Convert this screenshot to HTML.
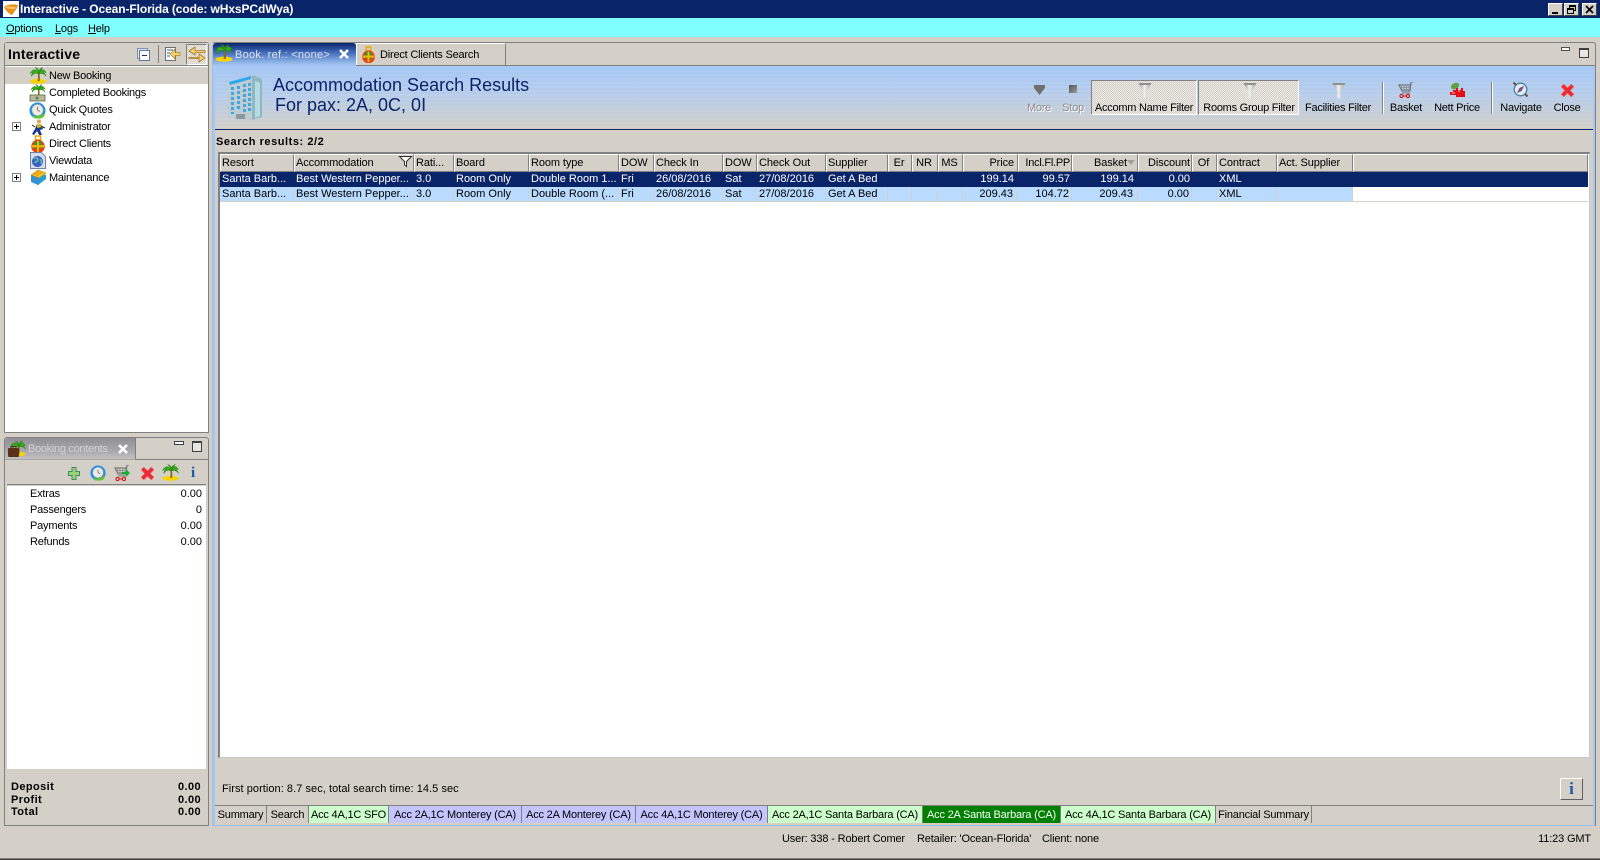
<!DOCTYPE html>
<html><head><meta charset="utf-8"><title>Interactive</title>
<style>
*{box-sizing:border-box}
html,body{margin:0;padding:0}
body{width:1600px;height:860px;position:relative;overflow:hidden;background:#d4d0c8;font:11px/13px "Liberation Sans",sans-serif;color:#000}
.a{position:absolute;white-space:nowrap}
.panel{position:absolute;border:1px solid #808080;border-radius:3px 3px 0 0}
.row{position:absolute;display:flex;left:220px;width:1368px;height:15px}
.row>div{height:15px;line-height:15px;padding:0 4px 0 2px;overflow:hidden;white-space:nowrap;flex:none}
.h{top:154px;height:18px;letter-spacing:-.1px}
.h>div{height:18px;line-height:17px;background:#d4d0c8;border-top:1px solid #fff;border-left:1px solid #fff;border-right:1px solid #808080;border-bottom:1px solid #808080;padding:0 3px 0 1px}
.r1{top:172px;background:#0a246a;color:#fff}
.r2{top:187px;height:14px;background:#b9dbff}
.r2>div{height:14px;border-right:1px solid #d4d0c8}
.r{text-align:right}
.c{text-align:center}
.row>.p2{padding-right:2px}
.h>.p2{padding-right:1px}
.tb{position:absolute;top:101px;height:14px;line-height:14px;text-align:center;white-space:nowrap;transform:translateX(-50%);letter-spacing:-.25px}
.chk{background-color:#eceae6;background-image:linear-gradient(45deg,#d4d0c8 25%,transparent 25%,transparent 75%,#d4d0c8 75%),linear-gradient(45deg,#d4d0c8 25%,transparent 25%,transparent 75%,#d4d0c8 75%);background-size:2px 2px;background-position:0 0,1px 1px}
.bt{position:absolute;top:806px;height:17px;line-height:18px;text-align:center;border-right:1px solid #808080;white-space:nowrap;overflow:hidden;letter-spacing:-.2px}
.tl{position:absolute;left:49px;height:17px;line-height:19px;white-space:nowrap;letter-spacing:-.25px}
.ex{position:absolute;left:12px;width:9px;height:9px;border:1px solid #808080;background:#fff}
.ex:before{content:"";position:absolute;left:1px;top:3px;width:5px;height:1px;background:#000}
.ex:after{content:"";position:absolute;left:3px;top:1px;width:1px;height:5px;background:#000}
.wb{position:absolute;top:3px;height:13px;width:15px;background:#d4d0c8;border:1px solid;border-color:#fff #404040 #404040 #fff}
svg{position:absolute;overflow:visible}
.l{position:absolute;left:30px;line-height:14px;letter-spacing:-.2px}
.v{position:absolute;right:1398px;line-height:14px}
.bl{position:absolute;left:11px;font-weight:bold;line-height:13px;letter-spacing:.4px}
.bv{position:absolute;right:1399px;font-weight:bold;line-height:13px;letter-spacing:.4px}
.s{letter-spacing:-.15px}
</style></head><body>
<svg width="0" height="0" style="position:absolute"><defs>
<linearGradient id="fg" x1="0" x2="1" y1="0" y2="0"><stop offset="0" stop-color="#8a8a8a"/><stop offset=".45" stop-color="#f2f2f2"/><stop offset="1" stop-color="#9a9a9a"/></linearGradient>
<symbol id="palm" viewBox="0 0 18 18"><ellipse cx="9" cy="15.200" rx="8.500" ry="2.600" fill="#f7d400"/><path d="M8.500 15c.6-3 .8-6 0-9h2c.6 3 .5 6 .2 9z" fill="#8a6a20"/><path d="M10 7C7 1 3 2 .5 7c1-1 2-1.500 3-1-1 1-1.500 2-1.500 4 2-3 4-4 8-3zM10 7c1-5 5-6 7.500-1-1-.6-2-.8-3-.5 1.500 1 2.500 2.500 3 4.500-2-3-4-3.500-7.500-3zM10 7C9 4 7.500 2 6 .5 8 1 9.500 2 10 4c1-2 2-3 4-3.500C12 3 11 5 10 7z" fill="#38a81c" stroke="#1f7c12" stroke-width=".5"/></symbol>
<symbol id="clock" viewBox="0 0 18 18"><circle cx="9" cy="9" r="8.500" fill="#2090ec"/><circle cx="9" cy="8.500" r="6" fill="#ecebe2" stroke="#9a9a9a" stroke-width=".6"/><path d="M9 5v3.500l2.500 1.500" fill="none" stroke="#777" stroke-width="1"/><path d="M3 13c3 3 8 3 12-.5l2 .5-1.500 3-3 1.500H6z" fill="#62c432"/></symbol>
<symbol id="funnel" viewBox="0 0 14 18"><path d="M0 1h14L8.700 10v7H5.300v-7z" fill="url(#fg)"/><path d="M0 1h14l-1.500 2.200h-11z" fill="#909090"/></symbol>
<symbol id="redx" viewBox="0 0 14 14"><path d="M0 3L3 0l4 4 4-4 3 3-4 4 4 4-3 3-4-4-4 4-3-3 4-4z" fill="#ee2b33" stroke="#e87a7a" stroke-width=".6"/></symbol>
<symbol id="cart" viewBox="0 0 16 16"><path d="M15 0h-2l-1 9H4L1 3h12" fill="none" stroke="#666" stroke-width="1"/><path d="M3.500 3v6M6 3v6M8.500 3v6M11 3v6M2 5.500h10M3 7.500h9" stroke="#8a8a8a" stroke-width=".8"/><path d="M4 11h8" stroke="#777"/><circle cx="3.500" cy="14" r="1.600" fill="none" stroke="#e00000"/><circle cx="10" cy="14" r="1.600" fill="none" stroke="#e00000"/><path d="M5 14h3.500" stroke="#e00000"/></symbol>
<symbol id="gift" viewBox="0 0 16 18"><path d="M5.500 1h5v4h-5z" fill="none" stroke="#e8a800" stroke-width="1.500"/><circle cx="8" cy="11.500" r="6.800" fill="#e8401c"/><path d="M4.500 6.500h7v7h-7z" fill="#2a9a30"/><path d="M1.500 10h13l-.6 2.500H2z" fill="#f2b000"/><path d="M7 6h2v11H7z" fill="#e8c000"/></symbol>
</defs></svg>

<!-- title -->
<div class="a" style="left:0;top:0;width:1600px;height:18px;background:#0a246a"></div>
<svg style="left:3px;top:1px" width="16" height="16" viewBox="0 0 16 16"><rect width="16" height="16" fill="#fff"/><path d="M1 6c4-3 9-3 14-2l-1 3-5 7C6 13 3 10 1 6z" fill="#e8901c"/><path d="M1 6c5-1 9-1 13 1-4 2-9 1-13-1z" fill="#f7c060"/></svg>
<div class="a" style="left:20px;top:2px;color:#fff;font-weight:bold;font-size:12px;line-height:14px;letter-spacing:-.1px">Interactive - Ocean-Florida (code: wHxsPCdWya)</div>
<div class="wb" style="left:1548px"><div style="position:absolute;left:3px;top:8px;width:6px;height:2px;background:#000"></div></div>
<div class="wb" style="left:1564px"><div style="position:absolute;left:4px;top:1px;width:7px;height:6px;border:1px solid #000;border-top-width:2px"></div><div style="position:absolute;left:2px;top:4px;width:7px;height:6px;border:1px solid #000;border-top-width:2px;background:#d4d0c8"></div></div>
<div class="wb" style="left:1582px"><svg style="left:2px;top:1px" width="9" height="9" viewBox="0 0 9 9"><path d="M1 1l7 7M8 1L1 8" stroke="#000" stroke-width="1.700"/></svg></div>

<!-- menu -->
<div class="a" style="left:0;top:18px;width:1600px;height:19px;background:#80ffff"></div>
<div class="a" style="left:6px;top:23px;letter-spacing:-.2px"><u>O</u>ptions</div>
<div class="a" style="left:55px;top:23px;letter-spacing:-.2px"><u>L</u>ogs</div>
<div class="a" style="left:88px;top:23px;letter-spacing:-.2px"><u>H</u>elp</div>

<!-- left top panel -->
<div class="panel" style="left:4px;top:42px;width:205px;height:391px;background:#fff"></div>
<div class="a" style="left:5px;top:43px;width:203px;height:23px;background:#d4d0c8;border-bottom:1px solid #808080"></div>
<div class="a" style="left:8px;top:46px;font-weight:bold;font-size:14px;line-height:17px;letter-spacing:.2px">Interactive</div>
<div class="a" style="left:137px;top:48px;width:11px;height:11px;border:1px solid #8090a8;background:#dfe6f0"></div>
<div class="a" style="left:139px;top:50px;width:11px;height:11px;border:1px solid #5878a8;background:#fff"><div style="position:absolute;left:2px;top:4px;width:5px;height:1px;background:#203060"></div></div>
<div class="a" style="left:158px;top:45px;width:1px;height:18px;background:#808080"></div>
<svg style="left:165px;top:47px" width="16" height="15" viewBox="0 0 16 15"><rect x=".5" y=".5" width="10" height="13" fill="#fff" stroke="#707070"/><path d="M2 3h6M2 6h3M2 9h3" stroke="#3060a0"/><path d="M15 5.500H10V2L5 7l5 5V8.500h5z" fill="#f5d27a" stroke="#b08020" stroke-width=".7"/></svg>
<div class="a chk" style="left:186px;top:44px;width:21px;height:21px;border:1px solid #fff;border-left-color:#808080;border-top-color:#808080"></div>
<svg style="left:188px;top:45px" width="18" height="18" viewBox="0 0 18 18"><path d="M17 5.500H7V2L1 6l6 4V7.500h10z" fill="#f5d27a" stroke="#a87818" stroke-width=".8"/><path d="M1 12.500h10V9l6 4-6 4v-3.500H1z" fill="#f5d27a" stroke="#a87818" stroke-width=".8"/></svg>
<div class="a" style="left:5px;top:67px;width:203px;height:17px;background:#d4d0c8"></div>

<svg style="left:29px;top:67px" width="18" height="17"><use href="#palm" width="18" height="17"/></svg>
<svg style="left:29px;top:84px" width="18" height="17"><use href="#palm" width="18" height="15"/><rect x="1" y="11" width="15" height="6" fill="#b8b8a0" stroke="#556b40" stroke-width=".8"/><circle cx="8" cy="14" r="1.500" fill="#608040"/></svg>
<svg style="left:29px;top:102px" width="17" height="17"><use href="#clock" width="17" height="17"/></svg>
<svg style="left:31px;top:119px" width="16" height="17" viewBox="0 0 16 17"><circle cx="8" cy="2.500" r="2" fill="#d8a060"/><path d="M6 5h4l2 5-3 1 2 5H8l-2-4-3 4-2-1 3-5z" fill="#1c3a90"/><path d="M6 5l4 0 1 3-5 1z" fill="#d8b820"/><path d="M10 7l4 2M4 8L1 6" stroke="#222"/></svg>
<svg style="left:30px;top:135px" width="16" height="18"><use href="#gift" width="16" height="18"/></svg>
<svg style="left:30px;top:152px" width="16" height="17" viewBox="0 0 16 17"><path d="M.5.500h11l4 4v12H.5z" fill="#d8dcec" stroke="#7080a8"/><circle cx="7.500" cy="9.500" r="5.500" fill="#3a60c8"/><path d="M4 7c2-2 4-1 4 1s-3 1-3 3M10 7c1 1 2 3 1 5" stroke="#60c0a0" stroke-width="1.500" fill="none"/></svg>
<svg style="left:30px;top:169px" width="17" height="17" viewBox="0 0 17 17"><path d="M1 8l6-5 9 3v4l-8 6-7-3z" fill="#2a9cd8"/><path d="M1 6l7-5 8 3-7 5z" fill="#f4c420" stroke="#c89410" stroke-width=".6"/><path d="M3 6l6-4M6 7l6-4" stroke="#e89010"/><path d="M1 6l8 3v7l-8-4z" fill="#3890d0"/></svg>

<div class="tl" style="top:67px">New Booking</div>
<div class="tl" style="top:84px">Completed Bookings</div>
<div class="tl" style="top:101px">Quick Quotes</div>
<div class="tl" style="top:118px">Administrator</div>
<div class="tl" style="top:135px">Direct Clients</div>
<div class="tl" style="top:152px">Viewdata</div>
<div class="tl" style="top:169px">Maintenance</div>
<div class="ex" style="top:122px"></div>
<div class="ex" style="top:173px"></div>

<!-- left bottom panel -->
<div class="panel" style="left:4px;top:437px;width:205px;height:389px;background:#d4d0c8"></div>
<div class="a" style="left:5px;top:438px;width:130px;height:22px;background:linear-gradient(#8f8f95,#a9a9ad 60%,#c6c4c2);border-radius:3px 0 0 0"></div>
<div class="a" style="left:135px;top:438px;width:1px;height:22px;background:#808080"></div>
<div class="a" style="left:5px;top:459px;width:130px;height:1px;background:#a8a8a8"></div>
<div class="a" style="left:136px;top:459px;width:72px;height:1px;background:#808080"></div>
<svg style="left:8px;top:440px" width="18" height="18"><use href="#palm" x="2" width="16" height="17"/><rect x="0" y="8" width="11" height="9" rx="1" fill="#5a3218"/><rect x="3" y="6.500" width="5" height="2" fill="none" stroke="#5a3218"/></svg>
<div class="a" style="left:28px;top:443px;color:#d4d0d0;letter-spacing:-.3px">Booking contents</div>
<svg style="left:118px;top:444px" width="10" height="10" viewBox="0 0 10 10"><path d="M1 1l8 8M9 1L1 9" stroke="#fff" stroke-width="2.600"/></svg>
<div class="a" style="left:174px;top:441px;width:10px;height:4px;border:1px solid #404040;background:#fff"></div>
<div class="a" style="left:192px;top:441px;width:10px;height:11px;border:1px solid #404040;border-top-width:2px;background:#e8e6e2"></div>
<div class="a" style="left:7px;top:460px;width:199px;height:25px;background:#d4d0c8;border-bottom:1px solid #808080"></div>
<svg style="left:68px;top:467px" width="12" height="13" viewBox="0 0 12 13"><path d="M4 .500h4v4h3.500v4H8v4H4v-4H.5v-4H4z" fill="#9ad07a" stroke="#3f9060"/></svg>
<svg style="left:90px;top:465px" width="16" height="16"><use href="#clock" width="16" height="16"/></svg>
<svg style="left:114px;top:465px" width="16" height="16"><use href="#cart" width="16" height="16"/><path d="M8 7h4V4l4 4-4 4V9H8z" fill="#12b030"/></svg>
<svg style="left:141px;top:467px" width="13" height="13"><use href="#redx" width="13" height="13"/></svg>
<svg style="left:162px;top:464px" width="17" height="17"><use href="#palm" width="17" height="17"/></svg>
<div class="a" style="left:191px;top:465px;width:6px;height:16px;font:bold 15px/16px 'Liberation Serif',serif;color:#1858a8">i</div>
<div class="a" style="left:7px;top:486px;width:199px;height:283px;background:#fff"></div>
<div class="l" style="top:487px">Extras</div><div class="v" style="top:487px">0.00</div>
<div class="l" style="top:503px">Passengers</div><div class="v" style="top:503px">0</div>
<div class="l" style="top:519px">Payments</div><div class="v" style="top:519px">0.00</div>
<div class="l" style="top:535px">Refunds</div><div class="v" style="top:535px">0.00</div>
<div class="bl" style="top:781px">Deposit</div><div class="bv" style="top:781px">0.00</div>
<div class="bl" style="top:794px">Profit</div><div class="bv" style="top:794px">0.00</div>
<div class="bl" style="top:806px">Total</div><div class="bv" style="top:806px">0.00</div>

<!-- right panel -->
<div class="panel" style="left:212px;top:42px;width:1384px;height:784px;background:#d4d0c8;border-color:#808080 #808080 #9cc0ec #9cc0ec"></div>
<div class="a" style="left:213px;top:65px;width:1382px;height:1px;background:#808080"></div>
<div class="a" style="left:213px;top:66px;width:2px;height:759px;background:#a6c8f5"></div>
<div class="a" style="left:1593px;top:66px;width:2px;height:759px;background:#a6c8f5"></div>
<div class="a" style="left:213px;top:43px;width:143px;height:23px;background:linear-gradient(#0a246a,#3a62b0 35%,#88aee4 80%,#a6c8f5);border-radius:3px 3px 0 0"></div>
<svg style="left:215px;top:44px" width="18" height="18"><use href="#palm" width="18" height="18"/></svg>
<div class="a" style="left:235px;top:49px;color:#dce6f6;letter-spacing:.25px">Book. ref.: &lt;none&gt;</div>
<svg style="left:339px;top:49px" width="10" height="10" viewBox="0 0 10 10"><path d="M1 1l8 8M9 1L1 9" stroke="#fff" stroke-width="2.600"/></svg>
<div class="a" style="left:356px;top:43px;width:150px;height:22px;border-right:1px solid #808080;border-left:1px solid #fff;border-top:1px solid #fff"></div>
<svg style="left:361px;top:46px" width="15" height="17"><use href="#gift" width="15" height="17"/></svg>
<div class="a" style="left:380px;top:49px;letter-spacing:-.2px">Direct Clients Search</div>
<div class="a" style="left:1561px;top:47px;width:9px;height:4px;border:1px solid #505050;background:#fff"></div>
<div class="a" style="left:1579px;top:48px;width:10px;height:10px;border:1px solid #404040;border-top-width:2px;background:#e8e6e2"></div>

<!-- blue header -->
<div class="a" style="left:215px;top:66px;width:1378px;height:63px;background:repeating-linear-gradient(rgba(255,255,255,.025) 0 2px,rgba(0,0,0,.008) 2px 4px),linear-gradient(#a6c9f6,#b8cfec 45%,#d4d0c8 100%)"></div>
<div class="a" style="left:215px;top:129px;width:1378px;height:1px;background:#0a246a"></div>
<svg style="left:228px;top:73px" width="36" height="48" viewBox="0 0 36 48"><path d="M0 9L24 2l10 4v38l-10 3-13-1L0 44z" fill="#c0ccd2"/><path d="M24 2l10 4v38l-10 3z" fill="#8eb8c0"/><path d="M27 8l5 2v33l-5 2z" fill="#c8e8f0" opacity=".7"/><path d="M1 9l22-6v3L2 12z" fill="#28a8f0"/><g fill="#3ca8e8"><path d="M3 14h3v3H3zM9 13h3v3H9zM15 11h3v3h-3zM20 10h3v3h-3zM3 19h3v3H3zM9 18h3v3H9zM15 16h3v3h-3zM20 15h3v3h-3zM3 24h3v3H3zM9 23h3v3H9zM15 21h3v3h-3zM20 20h3v3h-3zM3 29h3v3H3zM9 28h3v3H9zM15 26h3v3h-3zM20 25h3v3h-3zM3 34h3v3H3zM9 33h3v3H9zM15 31h3v3h-3zM20 30h3v3h-3zM3 39h3v2H3zM15 36h3v3h-3zM20 35h3v3h-3z"/></g><path d="M8 41h9v5H8z" fill="#8a98a0"/></svg>
<div class="a" style="left:273px;top:75px;font-size:18px;line-height:21px;color:#0a246a">Accommodation Search Results</div>
<div class="a" style="left:275px;top:95px;font-size:18px;line-height:21px;color:#0a246a">For pax: 2A, 0C, 0I</div>

<!-- toolbar -->
<svg style="left:1034px;top:85px" width="11" height="10" viewBox="0 0 11 10"><path d="M0 0h11v3L5.500 10 0 3z" fill="#707070"/></svg>
<div class="a" style="left:1069px;top:85px;width:8px;height:8px;background:linear-gradient(135deg,#555,#9a9a9a)"></div>
<div class="tb" style="left:1039px;color:#8c8c8c;text-shadow:1px 1px 0 #fff">More</div>
<div class="tb" style="left:1073px;color:#8c8c8c;text-shadow:1px 1px 0 #fff">Stop</div>
<div class="a chk" style="left:1091px;top:80px;width:106px;height:35px;border:1px solid;border-color:#808080 #fff #fff #808080"></div>
<div class="a chk" style="left:1198px;top:80px;width:101px;height:35px;border:1px solid;border-color:#808080 #fff #fff #808080"></div>
<svg style="left:1138px;top:82px" width="14" height="17"><use href="#funnel" width="14" height="17"/></svg>
<svg style="left:1243px;top:82px" width="14" height="17"><use href="#funnel" width="14" height="17"/></svg>
<svg style="left:1332px;top:82px" width="14" height="17"><use href="#funnel" width="14" height="17"/></svg>
<div class="tb" style="left:1144px">Accomm Name Filter</div>
<div class="tb" style="left:1249px">Rooms Group Filter</div>
<div class="tb" style="left:1338px">Facilities Filter</div>
<div class="a" style="left:1382px;top:82px;width:2px;height:32px;background:#808080;border-right:1px solid #fff"></div>
<div class="a" style="left:1491px;top:82px;width:2px;height:32px;background:#808080;border-right:1px solid #fff"></div>
<svg style="left:1398px;top:82px" width="16" height="16"><use href="#cart" width="16" height="16"/></svg>
<svg style="left:1449px;top:82px" width="17" height="16" viewBox="0 0 17 16"><path d="M2 5c0-3 4-5 7-4 2 1 1 5-2 6-3 1-5 0-5-2z" fill="#60a040"/><path d="M1 10h3V8h3V6h2v2h3V6h2v3h2v6H7v-2H1z" fill="#e80c18"/><path d="M3 11h3M9 9h2" stroke="#fff" stroke-width=".8"/></svg>
<svg style="left:1512px;top:81px" width="17" height="17" viewBox="0 0 17 17"><circle cx="8.500" cy="8.500" r="6.300" fill="#dfeef6" stroke="#4a7ea8" stroke-width="1.300"/><path d="M5 12l2.500-5 4.500-2-2.500 5z" fill="#e03020"/><path d="M5 12l4.500-2L12 5 7.500 7z" fill="#3060c0" opacity=".6"/><path d="M1.500 1.500l2.500 2.500M15.500 15.500L13 13" stroke="#6a5030" stroke-width="2"/></svg>
<svg style="left:1561px;top:84px" width="13" height="13"><use href="#redx" width="13" height="13"/></svg>
<div class="tb" style="left:1406px">Basket</div>
<div class="tb" style="left:1457px">Nett Price</div>
<div class="tb" style="left:1521px">Navigate</div>
<div class="tb" style="left:1567px">Close</div>

<div class="a" style="left:216px;top:135px;font-weight:bold;line-height:15px;letter-spacing:.55px">Search results: 2/2</div>

<!-- table -->
<div class="a" style="left:218px;top:152px;width:1372px;height:606px;background:#fff;border:1px solid;border-width:2px 1px 1px 2px;border-color:#808080 #c8c8c8 #c8c8c8 #808080"></div>
<div class="row h">
<div style="width:74px">Resort</div><div style="width:120px">Accommodation</div><div style="width:40px">Rati...</div><div style="width:75px">Board</div><div style="width:90px">Room type</div><div style="width:35px">DOW</div><div style="width:69px">Check In</div><div style="width:34px">DOW</div><div style="width:69px">Check Out</div><div style="width:62px">Supplier</div><div class="c" style="width:24px">Er</div><div class="c" style="width:26px">NR</div><div class="c" style="width:25px">MS</div><div class="r" style="width:55px">Price</div><div class="r p2" style="width:54px;letter-spacing:-.25px">Incl.Fl.PP</div><div class="r" style="width:66px;padding-right:10px">Basket</div><div class="r p2" style="width:54px">Discount</div><div class="c" style="width:25px">Of</div><div style="width:60px">Contract</div><div style="width:76px">Act. Supplier</div><div style="width:235px"></div>
</div>
<svg style="left:399px;top:156px" width="13" height="11" viewBox="0 0 13 11"><path d="M.5.500h12L7.500 5.500V10.500l-2-1.500V5.500z" fill="#fff" stroke="#303030"/></svg>
<svg style="left:1127px;top:160px" width="8" height="5" viewBox="0 0 8 5"><path d="M0 0h8L4 5z" fill="#a0a0a0"/></svg>
<div class="row r1">
<div style="width:74px">Santa Barb...</div><div style="width:120px">Best Western Pepper...</div><div style="width:40px">3.0</div><div style="width:75px">Room Only</div><div style="width:90px">Double Room 1...</div><div style="width:35px">Fri</div><div style="width:69px">26/08/2016</div><div style="width:34px">Sat</div><div style="width:69px">27/08/2016</div><div style="width:62px">Get A Bed</div><div style="width:24px"></div><div style="width:26px"></div><div style="width:25px"></div><div class="r" style="width:55px">199.14</div><div class="r p2" style="width:54px">99.57</div><div class="r" style="width:66px">199.14</div><div class="r p2" style="width:54px">0.00</div><div style="width:25px"></div><div style="width:60px">XML</div><div style="width:76px"></div><div style="width:235px"></div>
</div>
<div class="row r2">
<div style="width:74px">Santa Barb...</div><div style="width:120px">Best Western Pepper...</div><div style="width:40px">3.0</div><div style="width:75px">Room Only</div><div style="width:90px">Double Room (...</div><div style="width:35px">Fri</div><div style="width:69px">26/08/2016</div><div style="width:34px">Sat</div><div style="width:69px">27/08/2016</div><div style="width:62px">Get A Bed</div><div style="width:24px"></div><div style="width:26px"></div><div style="width:25px"></div><div class="r" style="width:55px">209.43</div><div class="r p2" style="width:54px">104.72</div><div class="r" style="width:66px">209.43</div><div class="r p2" style="width:54px">0.00</div><div style="width:25px"></div><div style="width:60px">XML</div><div style="width:76px"></div><div style="width:235px;background:#fff;border:0"></div>
</div>
<div class="a" style="left:220px;top:201px;width:1368px;height:1px;background:#d4d0c8"></div>

<div class="a" style="left:222px;top:783px;letter-spacing:.05px">First portion: 8.7 sec, total search time: 14.5 sec</div>
<div class="a" style="left:1560px;top:778px;width:23px;height:22px;background:#d4d0c8;border:1px solid;border-color:#fff #606060 #606060 #fff;text-align:center;font:bold 17px/20px 'Liberation Serif',serif;color:#1858a8">i</div>

<!-- bottom tabs -->
<div class="a" style="left:215px;top:805px;width:1378px;height:1px;background:#808080"></div>
<div class="bt" style="left:215px;width:52px">Summary</div>
<div class="bt" style="left:267px;width:42px">Search</div>
<div class="bt" style="left:309px;width:80px;background:#ccffcc">Acc 4A,1C SFO</div>
<div class="bt" style="left:389px;width:133px;background:#c4c4ff">Acc 2A,1C Monterey (CA)</div>
<div class="bt" style="left:522px;width:114px;background:#c4c4ff">Acc 2A Monterey (CA)</div>
<div class="bt" style="left:636px;width:132px;background:#c4c4ff">Acc 4A,1C Monterey (CA)</div>
<div class="bt" style="left:768px;width:155px;background:#ccffcc">Acc 2A,1C Santa Barbara (CA)</div>
<div class="bt" style="left:923px;width:138px;background:#008000;color:#fff">Acc 2A Santa Barbara (CA)</div>
<div class="bt" style="left:1061px;width:155px;background:#ccffcc">Acc 4A,1C Santa Barbara (CA)</div>
<div class="bt" style="left:1216px;width:96px">Financial Summary</div>

<!-- status -->
<div class="a s" style="left:782px;top:833px">User: 338 - Robert Comer</div>
<div class="a s" style="left:917px;top:833px">Retailer: 'Ocean-Florida'</div>
<div class="a s" style="left:1042px;top:833px">Client: none</div>
<div class="a" style="right:9px;top:833px;letter-spacing:-.15px">11:23 GMT</div>
<div class="a" style="left:0;top:858px;width:1600px;height:1px;background:#808080"></div>
<div class="a" style="left:0;top:859px;width:1600px;height:1px;background:#404040"></div>
</body></html>
